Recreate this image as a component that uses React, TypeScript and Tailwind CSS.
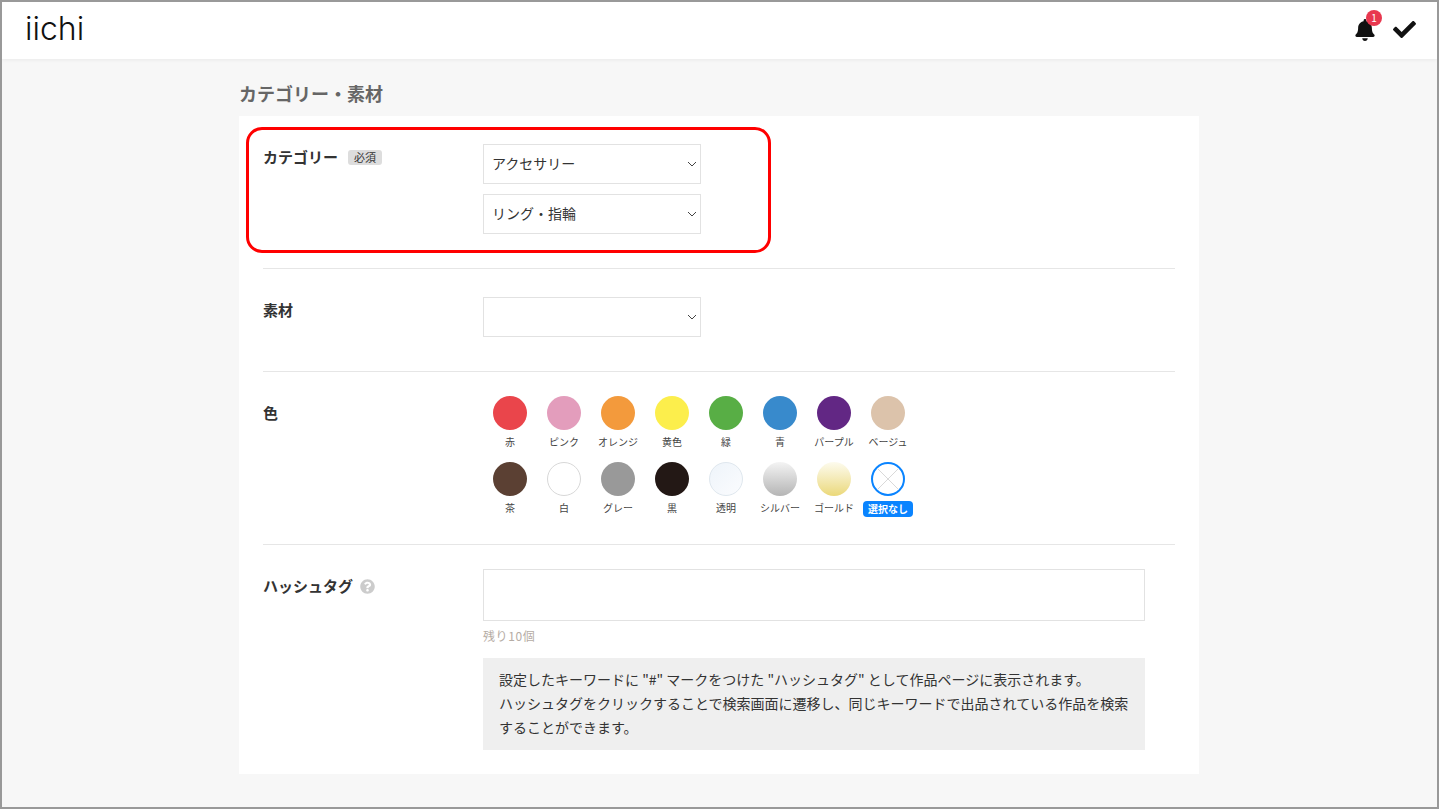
import { FaBell, FaCheck, FaQuestionCircle } from "react-icons/fa";

const font = { fontFamily: '"Noto Sans CJK JP", "Noto Sans", sans-serif' };

const row1 = [
  { name: "赤", cls: "bg-[#ea454b]" },
  { name: "ピンク", cls: "bg-[#e39dbc]" },
  { name: "オレンジ", cls: "bg-[#f39a3c]" },
  { name: "黄色", cls: "bg-[#fcee4c]" },
  { name: "緑", cls: "bg-[#58ae45]" },
  { name: "青", cls: "bg-[#388acc]" },
  { name: "パープル", cls: "bg-[#622784]" },
  { name: "ベージュ", cls: "bg-[#dcc3ab]" },
];

const row2 = [
  { name: "茶", cls: "bg-[#5b4033]" },
  { name: "白", cls: "bg-white border border-[#d8d8d8]" },
  { name: "グレー", cls: "bg-[#999999]" },
  { name: "黒", cls: "bg-[#231815]" },
  { name: "透明", cls: "bg-gradient-to-br from-[#eef4fa] to-[#fbfcfe] border border-[#dfe7ee]" },
  { name: "シルバー", cls: "bg-gradient-to-b from-[#f4f4f4] to-[#b5b5b5]" },
  { name: "ゴールド", cls: "bg-gradient-to-b from-[#fdfbee] to-[#ebd878]" },
];

function Select({ value }: { value: string }) {
  return (
    <div className="relative w-[218px] h-10">
      <select
        defaultValue={value}
        style={font}
        className="appearance-none w-full h-full bg-white border border-[#e2e2e2] pl-2 pr-6 pb-[2px] text-[14px] text-[#333] outline-none rounded-none"
      >
        <option>{value}</option>
      </select>
      <svg
        className="absolute right-[4px] top-[17px] pointer-events-none"
        width="10"
        height="6"
        viewBox="0 0 10 6"
        fill="none"
        stroke="#444"
        strokeWidth="1"
      >
        <path d="M1 1l4 4 4-4" />
      </svg>
    </div>
  );
}

function Swatch({ name, cls }: { name: string; cls: string }) {
  return (
    <div className="w-[54px] flex flex-col items-center">
      <div className={`w-[34px] h-[34px] rounded-full ${cls}`} />
      <div className="mt-[5px] h-[14px] text-[10px] leading-[14px] text-[#444] whitespace-nowrap">{name}</div>
    </div>
  );
}

export default function App() {
  return (
    <div style={font} className="relative w-[1439px] h-[809px] border-2 border-[#999] bg-[#f7f7f7] overflow-hidden box-border">
      <header className="relative h-[57px] bg-white shadow-[0_1px_4px_rgba(0,0,0,0.06)] flex items-center justify-between pl-[23px] pr-[21px]">
        <div style={{ fontFamily: "Inter, sans-serif" }} className="text-[32px] font-light text-[#111] leading-none pb-[3px]">
          iichi
        </div>
        <div className="flex items-center gap-[17px] pb-[2px]">
          <div className="relative">
            <FaBell className="text-[#111] w-[22px] h-[22px]" />
            <span className="absolute -top-[9px] left-[12px] w-4 h-4 rounded-full bg-[#e8384f] text-white text-[10px] leading-4 text-center">1</span>
          </div>
          <FaCheck className="text-[#111] w-[23px] h-[23px]" />
        </div>
      </header>

      <main className="w-[960px] ml-[237px]">
        <h2 className="pt-[21px] h-[57px] text-[18px] leading-[27px] font-bold text-[#666]">カテゴリー・素材</h2>
        <div className="bg-white px-6 h-[658px]">
          <section className="flex h-[153px] pt-[28px] border-b border-[#e6e6e6]">
            <div className="w-[220px] flex items-start pt-[2px]">
              <span className="text-[15px] leading-[22px] font-bold text-[#333]">カテゴリー</span>
              <span className="ml-[10px] mt-[4px] h-[15px] w-[34px] text-center rounded-[3px] bg-[#ddd] text-[11px] leading-[15px] text-[#333]">必須</span>
            </div>
            <div className="flex flex-col gap-[10px]">
              <Select value="アクセサリー" />
              <Select value="リング・指輪" />
            </div>
          </section>

          <section className="flex h-[103px] pt-[28px] border-b border-[#e6e6e6]">
            <div className="w-[220px] pt-[2px] text-[15px] leading-[22px] font-bold text-[#333]">素材</div>
            <Select value="" />
          </section>

          <section className="flex h-[173px] pt-[24px] border-b border-[#e6e6e6]">
            <div className="w-[220px] pt-[6px] text-[15px] leading-[22px] font-bold text-[#333]">色</div>
            <div>
              <div className="flex">
                {row1.map((c) => (
                  <Swatch key={c.name} {...c} />
                ))}
              </div>
              <div className="flex mt-[13px]">
                {row2.map((c) => (
                  <Swatch key={c.name} {...c} />
                ))}
                <div className="w-[54px] flex flex-col items-center">
                  <div className="w-[34px] h-[34px] rounded-full border-2 border-[#0a84ff] bg-white overflow-hidden">
                    <svg viewBox="0 0 30 30" className="w-full h-full" stroke="#d9d9d9" strokeWidth="1">
                      <path d="M4 4l22 22M26 4L4 26" />
                    </svg>
                  </div>
                  <div className="mt-[5px] h-4 px-[5px] rounded-[4px] bg-[#0a84ff] text-white text-[10px] leading-4 font-bold whitespace-nowrap">選択なし</div>
                </div>
              </div>
            </div>
          </section>

          <section className="flex pt-[24px]">
            <div className="w-[220px] flex items-start pt-[6px]">
              <span className="text-[15px] leading-[22px] font-bold text-[#333]">ハッシュタグ</span>
              <FaQuestionCircle className="ml-[7px] mt-[4px] w-[15px] h-[15px] text-[#ccc]" />
            </div>
            <div className="w-[662px]">
              <div className="h-[52px] border border-[#e2e2e2] bg-white" />
              <div className="mt-[6px] text-[12px] leading-[18px] tracking-[0.6px] text-[#b5aca4]">残り10個</div>
              <div className="mt-[13px] h-[92px] bg-[#efefef] px-4 py-[9px] text-[14px] leading-[24px] text-[#333]">
                <p>設定したキーワードに "#" マークをつけた "ハッシュタグ" として作品ページに表示されます。</p>
                <p>ハッシュタグをクリックすることで検索画面に遷移し、同じキーワードで出品されている作品を検索することができます。</p>
              </div>
            </div>
          </section>
        </div>
      </main>

      <div className="absolute left-[244px] top-[125px] w-[525px] h-[126px] border-[3px] border-[#f00] rounded-[16px] pointer-events-none" />
    </div>
  );
}
